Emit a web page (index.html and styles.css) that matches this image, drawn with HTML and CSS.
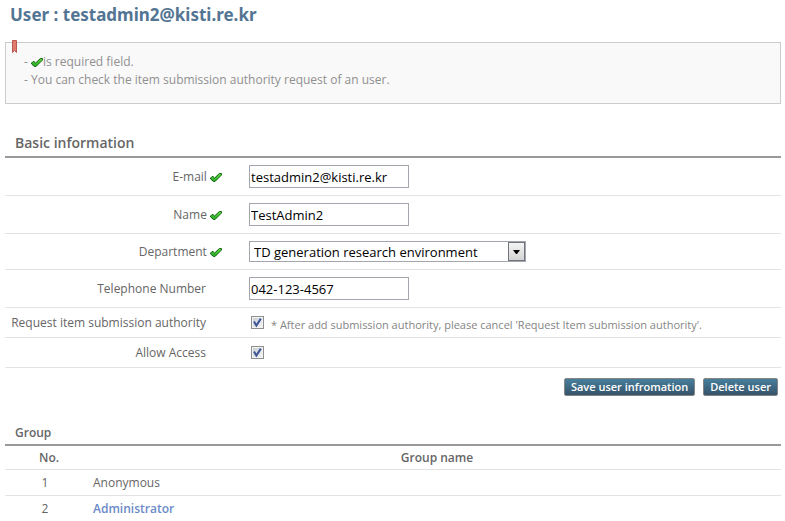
FILE: index.html
```html
<!DOCTYPE html>
<html lang="en">
<head>
<meta charset="utf-8">
<title>User : testadmin2@kisti.re.kr</title>
<link rel="stylesheet" href="styles.css">
</head>
<body>
<svg class="defs" aria-hidden="true">
  <defs>
    <linearGradient id="leaf" x1="0" y1="0" x2="0" y2="1">
      <stop offset="0" stop-color="#62e03c"/>
      <stop offset="1" stop-color="#22a822"/>
    </linearGradient>
    <symbol id="check" viewBox="0 0 12 11">
      <path d="M.6 6 2 4.600h1L4.600 6 9.400 1.500h2v1.600L5 9.500H3.600L.6 7z" fill="url(#leaf)" stroke="#0b5f10"/>
    </symbol>
    <symbol id="tick" viewBox="0 0 11 11">
      <path d="M2 4.600 4.400 8.600 8.800 1.600" fill="none" stroke="#3f5798" stroke-width="2"/>
    </symbol>
  </defs>
</svg>
<main>
  <h1>User : testadmin2@kisti.re.kr</h1>

  <div class="notice">
    <svg class="ribbon" viewBox="0 0 5 13" aria-hidden="true"><path d="M.5.5h4v12l-2-2-2 2z" fill="#e27b6e" stroke="#b8574f"/></svg>
    <ul>
      <li>- <svg class="check"><use href="#check"/></svg>is required field.</li>
      <li>- You can check the item submission authority request of an user.</li>
    </ul>
  </div>

  <form>
    <h2>Basic information</h2>
    <div class="rows">
      <div class="row">
        <label class="required" for="email">E-mail <svg class="check"><use href="#check"/></svg></label>
        <input class="text" id="email" type="text" value="testadmin2@kisti.re.kr">
      </div>
      <div class="row">
        <label class="required" for="name">Name <svg class="check"><use href="#check"/></svg></label>
        <input class="text" id="name" type="text" value="TestAdmin2">
      </div>
      <div class="row short">
        <label class="required" for="dept">Department <svg class="check"><use href="#check"/></svg></label>
        <div class="select">
          <select id="dept"><option>TD generation research environment</option></select>
          <span class="arrow"><svg viewBox="0 0 7 4" aria-hidden="true"><path d="M0 0h7L4 4H3z"/></svg></span>
        </div>
      </div>
      <div class="row">
        <label for="tel">Telephone Number</label>
        <input class="text" id="tel" type="text" value="042-123-4567">
      </div>
      <div class="row compact">
        <label for="request">Request item submission authority</label>
        <div class="option">
          <span class="box"><input id="request" type="checkbox" checked><svg><use href="#tick"/></svg></span>
          <span class="hint">* After add submission authority, please cancel 'Request Item submission authority'.</span>
        </div>
      </div>
      <div class="row compact">
        <label for="access">Allow Access</label>
        <div class="option">
          <span class="box"><input id="access" type="checkbox" checked><svg><use href="#tick"/></svg></span>
        </div>
      </div>
    </div>
    <div class="actions">
      <button type="submit">Save user infromation</button>
      <button type="button">Delete user</button>
    </div>
  </form>

  <section>
    <h3>Group</h3>
    <table>
      <thead><tr><th class="num">No.</th><th class="name">Group name</th></tr></thead>
      <tbody>
        <tr><td class="num">1</td><td>Anonymous</td></tr>
        <tr><td class="num">2</td><td><a href="#administrator">Administrator</a></td></tr>
      </tbody>
    </table>
  </section>
</main>
</body>
</html>
```
FILE: styles.css
```css
* { box-sizing: border-box; }

body {
  margin: 0;
  background: #fff;
  color: #666;
  font: 12px/18px "Open Sans", "Noto Sans", sans-serif;
}

main { padding: 4px 4px 0 5px; }

.defs { position: absolute; width: 0; height: 0; }

h1, h2, h3, ul { margin: 0; padding: 0; }

h1 {
  padding-left: 5px;
  color: #537593;
  font-family: "Noto Sans", sans-serif;
  font-size: 17px;
  line-height: 22px;
}

.notice {
  position: relative;
  min-height: 62px;
  margin-top: 16px;
  padding: 10px 18px;
  border: 1px solid #ccc;
  background: #f9f9f9;
  color: #909090;
}

.notice ul { list-style: none; }

.ribbon {
  position: absolute;
  top: -3px;
  left: 6px;
  width: 5px;
  height: 13px;
}

.check {
  width: 12px;
  height: 11px;
  vertical-align: -2px;
}

h2 {
  margin-top: 28px;
  padding: 0 10px 2px;
  font-size: 14px;
  font-weight: 600;
  line-height: 22px;
}

.rows, table { border-top: 2px solid #999; }

.row {
  display: grid;
  grid-template-columns: 217px 1fr;
  column-gap: 27px;
  align-items: center;
  height: 38px;
  border-bottom: 1px solid #e2e2e2;
}

.row.short { height: 36px; }
.row.compact { height: 30px; }

.row label {
  padding-right: 16px;
  text-align: right;
  white-space: nowrap;
}

.row label.required { padding-right: 0; }

.text, select {
  border: 1px solid #a5a5ad;
  border-radius: 0;
  background: #fff;
  color: #000;
  font: inherit;
  font-size: 13px;
}

.text {
  width: 160px;
  height: 23px;
  padding: 0 1px;
}

.select {
  position: relative;
  width: 277px;
  height: 21px;
}

select {
  appearance: none;
  display: block;
  width: 100%;
  height: 100%;
  padding: 0 20px 0 4px;
}

.arrow {
  position: absolute;
  top: 1px;
  right: 1px;
  display: grid;
  place-items: center;
  width: 17px;
  height: 19px;
  border: 1px solid #70757d;
  background: linear-gradient(#f4f4f4, #d4d4d4);
  pointer-events: none;
}

.arrow svg { width: 7px; height: 4px; }

.option {
  display: flex;
  align-items: center;
  gap: 7px;
  padding-left: 2px;
}

.box {
  display: grid;
  width: 13px;
  height: 13px;
}

.box > * { grid-area: 1 / 1; }

.box input {
  appearance: none;
  width: 13px;
  height: 13px;
  margin: 0;
  border: 1px solid #8e8f8f;
  background: linear-gradient(135deg, #c5cbd3, #f6f6f6);
  box-shadow: inset 0 0 0 1px #f4f4f4;
}

.box svg {
  width: 11px;
  height: 11px;
  margin: 1px;
  visibility: hidden;
  pointer-events: none;
}

.box input:checked + svg { visibility: visible; }

.hint {
  padding-top: 4px;
  color: #858585;
  font-size: 11px;
}

.actions {
  display: flex;
  justify-content: flex-end;
  gap: 8px;
  padding: 10px 3px 0 0;
}

button {
  height: 18px;
  padding: 0 6px;
  border: 1px solid #858585;
  border-radius: 2px;
  background: linear-gradient(#477f9d, #365368);
  color: #fff;
  font: 600 11px/14px "Open Sans", sans-serif;
}

h3 {
  margin-top: 28px;
  padding: 0 10px 2px;
  font-size: 12px;
  font-weight: 600;
  line-height: 18px;
}

table {
  width: 100%;
  border-collapse: separate;
  border-spacing: 0;
}

th, td {
  height: 26px;
  padding: 0 8px;
  border-bottom: 1px solid #e2e2e2;
  text-align: left;
}

th { height: 24px; font-weight: 600; text-align: center; }

.num { width: 80px; text-align: center; }

th.num, th.name { padding-left: 16px; }

a {
  color: #6b8bc8;
  font-weight: 600;
  text-decoration: none;
}
```
